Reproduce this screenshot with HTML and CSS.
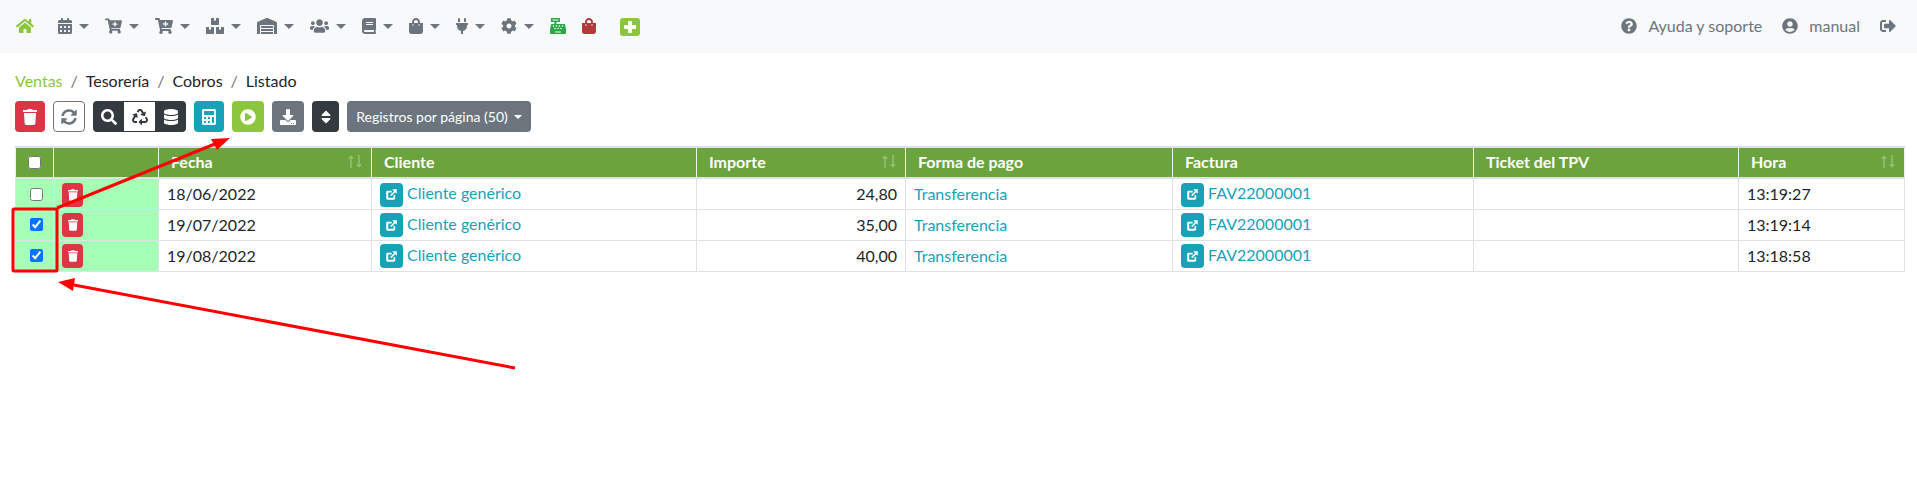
FILE: index.html
```html
<!DOCTYPE html>
<html lang="es">
<head>
<meta charset="utf-8">
<title>Cobros</title>
<link rel="stylesheet" href="styles.css">
</head>
<body>
<svg class="defs" aria-hidden="true">
<symbol id="i-home" viewBox="0 0 576 512"><path d="M280.37 148.26L96 300.11V464a16 16 0 0 0 16 16l112.06-.29a16 16 0 0 0 15.92-16V368a16 16 0 0 1 16-16h64a16 16 0 0 1 16 16v95.64a16 16 0 0 0 16 16.05L464 480a16 16 0 0 0 16-16V300L295.67 148.26a12.19 12.19 0 0 0-15.3 0zM571.6 251.47L488 182.56V44.05a12 12 0 0 0-12-12h-56a12 12 0 0 0-12 12v72.61L318.47 43a48 48 0 0 0-61 0L4.34 251.47a12 12 0 0 0-1.6 16.9l25.5 31A12 12 0 0 0 45.15 301l235.22-193.74a12.19 12.19 0 0 1 15.3 0L530.9 301a12 12 0 0 0 16.9-1.6l25.5-31a12 12 0 0 0-1.7-16.93z"/></symbol>
<symbol id="i-cal" viewBox="0 0 448 512"><path d="M0 464c0 26.5 21.5 48 48 48h352c26.5 0 48-21.5 48-48V192H0v272zm320-196c0-6.6 5.4-12 12-12h40c6.6 0 12 5.4 12 12v40c0 6.6-5.4 12-12 12h-40c-6.6 0-12-5.4-12-12v-40zm0 128c0-6.6 5.4-12 12-12h40c6.6 0 12 5.4 12 12v40c0 6.6-5.4 12-12 12h-40c-6.6 0-12-5.4-12-12v-40zM192 268c0-6.6 5.4-12 12-12h40c6.6 0 12 5.4 12 12v40c0 6.6-5.4 12-12 12h-40c-6.6 0-12-5.4-12-12v-40zm0 128c0-6.6 5.4-12 12-12h40c6.6 0 12 5.4 12 12v40c0 6.6-5.4 12-12 12h-40c-6.6 0-12-5.4-12-12v-40zM64 268c0-6.6 5.4-12 12-12h40c6.6 0 12 5.4 12 12v40c0 6.6-5.4 12-12 12H76c-6.6 0-12-5.4-12-12v-40zm0 128c0-6.6 5.4-12 12-12h40c6.6 0 12 5.4 12 12v40c0 6.6-5.4 12-12 12H76c-6.6 0-12-5.4-12-12v-40zM400 64h-48V16c0-8.8-7.2-16-16-16h-32c-8.8 0-16 7.2-16 16v48H160V16c0-8.8-7.2-16-16-16h-32c-8.8 0-16 7.2-16 16v48H48C21.5 64 0 85.5 0 112v48h448v-48c0-26.5-21.5-48-48-48z"/></symbol>
<symbol id="i-cart" viewBox="0 0 576 512"><path d="M504.717 320H211.572l6.545 32h268.418c15.401 0 26.816 14.301 23.403 29.319l-5.517 24.276C523.112 414.668 536 433.828 536 456c0 31.202-25.519 56.444-56.824 55.994-29.823-.429-54.35-24.631-55.155-54.447-.44-16.287 6.085-31.049 16.803-41.548H231.176C241.553 426.165 248 440.326 248 456c0 31.813-26.528 57.431-58.67 55.938-28.54-1.325-51.751-24.385-53.251-52.917-1.158-22.034 10.436-41.455 28.051-51.586L93.883 64H24C10.745 64 0 53.255 0 40V24C0 10.745 10.745 0 24 0h102.529c11.401 0 21.228 8.021 23.513 19.19L159.208 64H551.99c15.401 0 26.816 14.301 23.403 29.319l-47.273 208C525.637 312.246 515.923 320 504.717 320zM408 168h-48v-40c0-8.837-7.163-16-16-16h-16c-8.837 0-16 7.163-16 16v40h-48c-8.837 0-16 7.163-16 16v16c0 8.837 7.163 16 16 16h48v40c0 8.837 7.163 16 16 16h16c8.837 0 16-7.163 16-16v-40h48c8.837 0 16-7.163 16-16v-16c0-8.837-7.163-16-16-16z"/></symbol>
<symbol id="i-boxes" viewBox="0 0 576 512"><path d="M560 288h-80v96l-32-21.3-32 21.3v-96h-80c-8.8 0-16 7.2-16 16v192c0 8.8 7.2 16 16 16h224c8.8 0 16-7.2 16-16V304c0-8.8-7.2-16-16-16zm-384-64h224c8.8 0 16-7.2 16-16V16c0-8.8-7.2-16-16-16h-80v96l-32-21.3L256 96V0h-80c-8.8 0-16 7.2-16 16v192c0 8.8 7.2 16 16 16zm64 64h-80v96l-32-21.3L96 384v-96H16c-8.8 0-16 7.2-16 16v192c0 8.8 7.2 16 16 16h224c8.8 0 16-7.2 16-16V304c0-8.8-7.2-16-16-16z"/></symbol>
<symbol id="i-ware" viewBox="0 0 640 512"><path d="M504 352H136.4c-4.4 0-8 3.6-8 8l-.1 48c0 4.4 3.6 8 8 8H504c4.4 0 8-3.6 8-8v-48c0-4.4-3.6-8-8-8zm0 96H136.1c-4.4 0-8 3.6-8 8l-.1 48c0 4.4 3.6 8 8 8h368c4.4 0 8-3.6 8-8v-48c0-4.4-3.6-8-8-8zm0-192H136.6c-4.4 0-8 3.6-8 8l-.1 48c0 4.4 3.6 8 8 8H504c4.4 0 8-3.6 8-8v-48c0-4.4-3.6-8-8-8zm106.5-139L338.4 3.7a48.15 48.15 0 0 0-36.9 0L29.5 117C11.7 124.5 0 141.9 0 161.3V504c0 4.4 3.6 8 8 8h80c4.4 0 8-3.6 8-8V256c0-17.6 14.6-32 32.6-32h382.8c18 0 32.6 14.4 32.6 32v248c0 4.4 3.6 8 8 8h80c4.4 0 8-3.6 8-8V161.3c0-19.4-11.7-36.8-29.5-44.3z"/></symbol>
<symbol id="i-users" viewBox="0 0 640 512"><path d="M96 224c35.3 0 64-28.7 64-64s-28.7-64-64-64-64 28.7-64 64 28.7 64 64 64zm448 0c35.3 0 64-28.7 64-64s-28.7-64-64-64-64 28.7-64 64 28.7 64 64 64zm32 32h-64c-17.6 0-33.5 7.1-45.1 18.6 40.3 22.1 68.9 62 75.1 109.4h66c17.7 0 32-14.3 32-32v-32c0-35.3-28.7-64-64-64zm-256 0c61.9 0 112-50.1 112-112S381.9 32 320 32 208 82.1 208 144s50.1 112 112 112zm76.8 32h-8.3c-20.8 10-43.9 16-68.5 16s-47.6-6-68.5-16h-8.3C179.6 288 128 339.6 128 403.2V432c0 26.5 21.5 48 48 48h288c26.5 0 48-21.5 48-48v-28.8c0-63.6-51.6-115.2-115.2-115.2zm-223.7-13.4C161.5 263.1 145.6 256 128 256H64c-35.3 0-64 28.7-64 64v32c0 17.7 14.3 32 32 32h65.9c6.3-47.4 34.9-87.3 75.2-109.4z"/></symbol>
<symbol id="i-book" viewBox="0 0 448 512"><path d="M448 360V24c0-13.3-10.7-24-24-24H96C43 0 0 43 0 96v320c0 53 43 96 96 96h328c13.3 0 24-10.7 24-24v-16c0-7.5-3.5-14.3-8.9-18.7-4.2-15.4-4.2-59.3 0-74.7 5.4-4.3 8.9-11.1 8.9-18.6zM128 134c0-3.3 2.7-6 6-6h212c3.3 0 6 2.7 6 6v20c0 3.3-2.7 6-6 6H134c-3.3 0-6-2.7-6-6v-20zm0 64c0-3.3 2.7-6 6-6h212c3.3 0 6 2.7 6 6v20c0 3.3-2.7 6-6 6H134c-3.3 0-6-2.7-6-6v-20zm253.4 250H96c-17.7 0-32-14.3-32-32 0-17.6 14.4-32 32-32h285.4c-1.9 17.1-1.9 46.9 0 64z"/></symbol>
<symbol id="i-bag" viewBox="0 0 448 512"><path d="M352 160v-32C352 57.42 294.579 0 224 0 153.42 0 96 57.42 96 128v32H0v272c0 44.183 35.817 80 80 80h288c44.183 0 80-35.817 80-80V160h-96zm-192-32c0-35.29 28.71-64 64-64s64 28.71 64 64v32H160v-32zm160 120c-13.255 0-24-10.745-24-24s10.745-24 24-24 24 10.745 24 24-10.745 24-24 24zm-192 0c-13.255 0-24-10.745-24-24s10.745-24 24-24 24 10.745 24 24-10.745 24-24 24z"/></symbol>
<symbol id="i-plug" viewBox="0 0 384 512"><path d="M320,32a32,32,0,0,0-64,0v96h64Zm48,128H16A16,16,0,0,0,0,176v32a16,16,0,0,0,16,16H32v32A160.07,160.07,0,0,0,160,412.8V512h64V412.8A160.07,160.07,0,0,0,352,256V224h16a16,16,0,0,0,16-16V176A16,16,0,0,0,368,160ZM128,32a32,32,0,0,0-64,0v96h64Z"/></symbol>
<symbol id="i-cog" viewBox="0 0 512 512"><path d="M487.4 315.7l-42.6-24.6c4.3-23.2 4.3-47 0-70.2l42.6-24.6c4.9-2.8 7.1-8.6 5.5-14-11.1-35.6-30-67.8-54.7-94.6-3.8-4.1-10-5.1-14.8-2.3L380.8 110c-17.9-15.4-38.5-27.3-60.8-35.1V25.8c0-5.6-3.9-10.5-9.4-11.7-36.7-8.2-74.3-7.8-109.2 0-5.5 1.2-9.4 6.1-9.4 11.7V75c-22.2 7.9-42.8 19.8-60.8 35.1L88.7 85.5c-4.9-2.8-11-1.9-14.8 2.3-24.7 26.7-43.6 58.9-54.7 94.6-1.7 5.4.6 11.2 5.5 14L67.3 221c-4.3 23.2-4.3 47 0 70.2l-42.6 24.6c-4.9 2.8-7.1 8.6-5.5 14 11.1 35.6 30 67.8 54.7 94.6 3.8 4.1 10 5.1 14.8 2.3l42.6-24.6c17.9 15.4 38.5 27.3 60.8 35.1v49.2c0 5.6 3.9 10.5 9.4 11.7 36.7 8.2 74.3 7.8 109.2 0 5.5-1.2 9.4-6.1 9.4-11.7v-49.2c22.2-7.9 42.8-19.8 60.8-35.1l42.6 24.6c4.9 2.8 11 1.9 14.8-2.3 24.7-26.7 43.6-58.9 54.7-94.6 1.5-5.5-.7-11.3-5.6-14.1zM256 336c-44.1 0-80-35.9-80-80s35.9-80 80-80 80 35.9 80 80-35.9 80-80 80z"/></symbol>
<symbol id="i-cash" viewBox="0 0 512 512"><path d="M511.1 378.8l-26.7-160c-2.6-15.4-15.9-26.7-31.6-26.7H208v-64h96c8.8 0 16-7.2 16-16V16c0-8.8-7.2-16-16-16H48c-8.8 0-16 7.2-16 16v96c0 8.8 7.2 16 16 16h96v64H59.1c-15.6 0-29 11.3-31.6 26.7L.8 378.7c-.6 3.5-.9 7-.9 10.5V480c0 17.7 14.3 32 32 32h448c17.7 0 32-14.3 32-32v-90.7c.1-3.5-.2-7-.8-10.5zM280 248c0-8.8 7.2-16 16-16h16c8.8 0 16 7.2 16 16v16c0 8.8-7.2 16-16 16h-16c-8.8 0-16-7.2-16-16v-16zm-32 64h16c8.8 0 16 7.2 16 16v16c0 8.8-7.2 16-16 16h-16c-8.8 0-16-7.2-16-16v-16c0-8.8 7.2-16 16-16zm-32-80c8.8 0 16 7.2 16 16v16c0 8.8-7.2 16-16 16h-16c-8.8 0-16-7.2-16-16v-16c0-8.8 7.2-16 16-16h16zM80 80V48h192v32H80zm40 200h-16c-8.8 0-16-7.2-16-16v-16c0-8.8 7.2-16 16-16h16c8.8 0 16 7.2 16 16v16c0 8.8-7.2 16-16 16zm16 64v-16c0-8.8 7.2-16 16-16h16c8.8 0 16 7.2 16 16v16c0 8.8-7.2 16-16 16h-16c-8.8 0-16-7.2-16-16zm216 112c0 4.4-3.6 8-8 8H168c-4.4 0-8-3.6-8-8v-16c0-4.4 3.6-8 8-8h176c4.4 0 8 3.6 8 8v16zm24-112c0 8.8-7.2 16-16 16h-16c-8.8 0-16-7.2-16-16v-16c0-8.8 7.2-16 16-16h16c8.8 0 16 7.2 16 16v16zm48-80c0 8.8-7.2 16-16 16h-16c-8.8 0-16-7.2-16-16v-16c0-8.8 7.2-16 16-16h16c8.8 0 16 7.2 16 16v16z"/></symbol>
<symbol id="i-help" viewBox="0 0 512 512"><path d="M504 256c0 136.997-111.043 248-248 248S8 392.997 8 256C8 119.083 119.043 8 256 8s248 111.083 248 248zM262.655 90c-54.497 0-89.255 22.957-116.549 63.758-3.536 5.286-2.353 12.415 2.715 16.258l34.699 26.31c5.205 3.947 12.621 3.008 16.665-2.122 17.864-22.658 30.113-35.797 57.303-35.797 20.429 0 45.698 13.148 45.698 32.958 0 14.976-12.363 22.667-32.534 33.976C247.128 238.528 216 254.941 216 296v4c0 6.627 5.373 12 12 12h56c6.627 0 12-5.373 12-12v-1.333c0-28.462 83.186-29.647 83.186-106.667 0-58.002-60.165-102-116.531-102zM256 338c-25.365 0-46 20.635-46 46 0 25.364 20.635 46 46 46s46-20.636 46-46c0-25.365-20.635-46-46-46z"/></symbol>
<symbol id="i-user" viewBox="0 0 496 512"><path d="M248 8C111 8 0 119 0 256s111 248 248 248 248-111 248-248S385 8 248 8zm0 96c48.6 0 88 39.4 88 88s-39.4 88-88 88-88-39.4-88-88 39.4-88 88-88zm0 344c-58.7 0-111.3-26.6-146.5-68.2 18.8-35.4 55.6-59.8 98.5-59.8 2.4 0 4.8.4 7.1 1.1 13 4.2 26.6 6.9 40.9 6.9 14.3 0 28-2.7 40.9-6.9 2.3-.7 4.7-1.1 7.1-1.1 42.9 0 79.7 24.4 98.5 59.8C359.3 421.4 306.7 448 248 448z"/></symbol>
<symbol id="i-out" viewBox="0 0 512 512"><path d="M497 273L329 441c-15 15-41 4.5-41-17v-96H152c-13.3 0-24-10.7-24-24v-96c0-13.3 10.7-24 24-24h136V88c0-21.4 25.9-32 41-17l168 168c9.3 9.4 9.3 24.6 0 34zM192 436v-40c0-6.6-5.4-12-12-12H96c-17.7 0-32-14.3-32-32V160c0-17.7 14.3-32 32-32h84c6.6 0 12-5.4 12-12V76c0-6.6-5.4-12-12-12H96c-53 0-96 43-96 96v192c0 53 43 96 96 96h84c6.6 0 12-5.4 12-12z"/></symbol>
<symbol id="i-trash" viewBox="0 0 448 512"><path d="M432 32H312l-9.4-18.7A24 24 0 0 0 281.1 0H166.8a23.72 23.72 0 0 0-21.4 13.3L136 32H16A16 16 0 0 0 0 48v32a16 16 0 0 0 16 16h416a16 16 0 0 0 16-16V48a16 16 0 0 0-16-16zM53.2 467a48 48 0 0 0 47.9 45h245.8a48 48 0 0 0 47.9-45L416 128H32z"/></symbol>
<symbol id="i-sync" viewBox="0 0 512 512"><path d="M370.72 133.28C339.458 104.008 298.888 87.962 255.848 88c-77.458.068-144.328 53.178-162.791 126.85-1.344 5.363-6.122 9.15-11.651 9.15H24.103c-7.498 0-13.194-6.807-11.807-14.176C33.933 94.924 134.813 8 256 8c66.448 0 126.791 26.136 171.315 68.685L463.03 40.97C478.149 25.851 504 36.559 504 57.941V192c0 13.255-10.745 24-24 24H345.941c-21.382 0-32.09-25.851-16.971-40.971l41.75-41.749zM32 296h134.059c21.382 0 32.09 25.851 16.971 40.971l-41.75 41.75c31.262 29.273 71.835 45.319 114.876 45.28 77.418-.07 144.315-53.144 162.787-126.849 1.344-5.363 6.122-9.15 11.651-9.15h57.304c7.498 0 13.194 6.807 11.807 14.176C478.067 417.076 377.187 504 256 504c-66.448 0-126.791-26.136-171.315-68.685L48.97 471.03C33.851 486.149 8 475.441 8 454.059V320c0-13.255 10.745-24 24-24z"/></symbol>
<symbol id="i-search" viewBox="0 0 512 512"><path d="M505 442.7L405.3 343c-4.5-4.5-10.6-7-17-7H372c27.6-35.3 44-79.7 44-128C416 93.1 322.9 0 208 0S0 93.1 0 208s93.1 208 208 208c48.3 0 92.7-16.4 128-44v16.3c0 6.4 2.5 12.5 7 17l99.7 99.7c9.4 9.4 24.6 9.4 33.9 0l28.3-28.3c9.4-9.4 9.4-24.6.1-34zM208 336c-70.7 0-128-57.2-128-128 0-70.7 57.2-128 128-128 70.7 0 128 57.2 128 128 0 70.7-57.2 128-128 128z"/></symbol>
<symbol id="i-recycle" viewBox="0 0 512 512"><path d="M184.561 261.903c3.232 13.997-12.123 24.635-24.068 17.168l-40.736-25.455-50.867 81.402C55.606 356.273 70.96 384 96.012 384H148c6.627 0 12 5.373 12 12v40c0 6.627-5.373 12-12 12H96.115c-75.334 0-121.302-83.048-81.408-146.88l50.822-81.388-40.725-25.448c-12.081-7.547-8.966-25.961 4.879-29.158l110.237-25.45c8.611-1.988 17.201 3.381 19.189 11.99l25.452 110.237zm98.561-182.915l41.289 66.076-40.74 25.457c-12.051 7.528-9 25.953 4.879 29.158l110.237 25.45c8.672 1.999 17.215-3.438 19.189-11.99l25.45-110.237c3.197-13.844-11.99-24.719-24.068-17.168l-40.687 25.424-41.263-66.082c-37.521-60.033-125.209-60.171-162.816 0l-17.963 28.766c-3.51 5.62-1.8 13.021 3.82 16.533l33.919 21.195c5.62 3.512 13.024 1.803 16.536-3.817l17.961-28.743c12.712-20.341 41.973-19.676 54.257-.022zM497.288 301.12l-27.515-44.065c-3.511-5.623-10.916-7.334-16.538-3.821l-33.861 21.159c-5.62 3.512-7.33 10.915-3.818 16.536l27.564 44.112c13.257 21.211-2.057 48.96-27.136 48.96H320V336.02c0-14.213-17.242-21.383-27.313-11.313l-80 79.981c-6.249 6.248-6.249 16.379 0 22.627l80 79.989C302.689 517.308 320 510.3 320 495.989V448h95.88c75.274 0 121.335-82.997 81.408-146.88z"/></symbol>
<symbol id="i-db" viewBox="0 0 448 512"><path d="M448 73.143v45.714C448 159.143 347.667 192 224 192S0 159.143 0 118.857V73.143C0 32.857 100.333 0 224 0s224 32.857 224 73.143zM448 176v102.857C448 319.143 347.667 352 224 352S0 319.143 0 278.857V176c48.125 33.143 136.208 48.572 224 48.572S399.874 209.143 448 176zm0 160v102.857C448 479.143 347.667 512 224 512S0 479.143 0 438.857V336c48.125 33.143 136.208 48.572 224 48.572S399.874 369.143 448 336z"/></symbol>
<symbol id="i-calc" viewBox="0 0 448 512"><path d="M400 0H48C22.4 0 0 22.4 0 48v416c0 25.6 22.4 48 48 48h352c25.6 0 48-22.4 48-48V48c0-25.6-22.4-48-48-48zM128 435.2c0 6.4-6.4 12.8-12.8 12.8H76.8c-6.4 0-12.8-6.4-12.8-12.8v-38.4c0-6.4 6.4-12.8 12.8-12.8h38.4c6.4 0 12.8 6.4 12.8 12.8v38.4zm0-128c0 6.4-6.4 12.8-12.8 12.8H76.8c-6.4 0-12.8-6.4-12.8-12.8v-38.4c0-6.4 6.4-12.8 12.8-12.8h38.4c6.4 0 12.8 6.4 12.8 12.8v38.4zm128 128c0 6.4-6.4 12.8-12.8 12.8h-38.4c-6.4 0-12.8-6.4-12.8-12.8v-38.4c0-6.4 6.4-12.8 12.8-12.8h38.4c6.4 0 12.8 6.4 12.8 12.8v38.4zm0-128c0 6.4-6.4 12.8-12.8 12.8h-38.4c-6.4 0-12.8-6.4-12.8-12.8v-38.4c0-6.4 6.4-12.8 12.8-12.8h38.4c6.4 0 12.8 6.4 12.8 12.8v38.4zm128 128c0 6.4-6.4 12.8-12.8 12.8h-38.4c-6.4 0-12.8-6.4-12.8-12.8V268.8c0-6.4 6.4-12.8 12.8-12.8h38.4c6.4 0 12.8 6.4 12.8 12.8v166.4zm0-256c0 6.4-6.4 12.8-12.8 12.8H76.8c-6.4 0-12.8-6.4-12.8-12.8V76.8C64 70.4 70.4 64 76.8 64h294.4c6.4 0 12.8 6.4 12.8 12.8v102.4z"/></symbol>
<symbol id="i-play" viewBox="0 0 512 512"><path d="M256 8C119 8 8 119 8 256s111 248 248 248 248-111 248-248S393 8 256 8zm115.7 272l-176 101c-15.8 8.8-35.7-2.5-35.7-21V152c0-18.4 19.8-29.8 35.7-21l176 107c16.4 9.2 16.4 32.9 0 42z"/></symbol>
<symbol id="i-down" viewBox="0 0 512 512"><path d="M216 0h80c13.3 0 24 10.7 24 24v168h87.7c17.8 0 26.7 21.5 14.1 34.1L269.7 378.3c-7.5 7.5-19.8 7.5-27.3 0L90.1 226.1c-12.6-12.6-3.7-34.1 14.1-34.1H192V24c0-13.3 10.7-24 24-24zm296 376v112c0 13.3-10.7 24-24 24H24c-13.3 0-24-10.7-24-24V376c0-13.3 10.7-24 24-24h146.7l49 49c20.1 20.1 52.5 20.1 72.6 0l49-49H488c13.3 0 24 10.7 24 24zm-124 88c0-11-9-20-20-20s-20 9-20 20 9 20 20 20 20-9 20-20zm64 0c0-11-9-20-20-20s-20 9-20 20 9 20 20 20 20-9 20-20z"/></symbol>
<symbol id="i-sort" viewBox="0 0 320 512"><path d="M41 288h238c21.4 0 32.1 25.9 17 41L177 448c-9.4 9.4-24.6 9.4-33.9 0L24 329c-15.1-15.1-4.4-41 17-41zm255-105L177 64c-9.4-9.4-24.6-9.4-33.9 0L24 183c-15.1 15.1-4.4 41 17 41h238c21.4 0 32.1-25.9 17-41z"/></symbol>
<symbol id="i-ext" viewBox="0 0 512 512"><path d="M96 112h168v64H128v208h208V272h64v144c0 26-22 48-48 48H96c-26 0-48-22-48-48V160c0-26 22-48 48-48zM304 48h150c6 0 10 4 10 10v150c0 9-11 13-17 7l-48-48-144 144c-4 4-10 4-14 0l-29-29c-4-4-4-10 0-14l144-144-59-59c-6-6-2-17 7-17z"/></symbol>
<symbol id="i-arrows" viewBox="0 0 14 13"><path d="M3 13V1.5M.8 3.8 3 1.3l2.2 2.5M11 0v11.5M8.800 9.200 11 11.700l2.200-2.500"/></symbol>
</svg>

<nav class="topbar">
  <div class="menu">
    <a class="item home"><svg class="ic w18 green"><use href="#i-home"/></svg></a>
    <a class="item"><svg class="ic w14"><use href="#i-cal"/></svg><i class="caret"></i></a>
    <a class="item"><svg class="ic w17"><use href="#i-cart"/></svg><i class="caret"></i></a>
    <a class="item"><svg class="ic w18"><use href="#i-cart"/></svg><i class="caret"></i></a>
    <a class="item"><svg class="ic w18"><use href="#i-boxes"/></svg><i class="caret"></i></a>
    <a class="item"><svg class="ic w20"><use href="#i-ware"/></svg><i class="caret"></i></a>
    <a class="item"><svg class="ic w19"><use href="#i-users"/></svg><i class="caret"></i></a>
    <a class="item"><svg class="ic w14"><use href="#i-book"/></svg><i class="caret"></i></a>
    <a class="item"><svg class="ic w14"><use href="#i-bag"/></svg><i class="caret"></i></a>
    <a class="item"><svg class="ic w12"><use href="#i-plug"/></svg><i class="caret"></i></a>
    <a class="item"><svg class="ic w16"><use href="#i-cog"/></svg><i class="caret"></i></a>
    <a class="item"><svg class="ic w16 c-cash"><use href="#i-cash"/></svg></a>
    <a class="item"><svg class="ic w14 c-bag"><use href="#i-bag"/></svg></a>
    <a class="item plus-item"><span class="plus"></span></a>
  </div>
  <div class="user">
    <a class="uitem"><svg class="ic w16"><use href="#i-help"/></svg><span>Ayuda y soporte</span></a>
    <a class="uitem"><svg class="ic w16"><use href="#i-user"/></svg><span>manual</span></a>
    <a class="uitem"><svg class="ic w16"><use href="#i-out"/></svg></a>
  </div>
</nav>

<main class="content">
  <ol class="crumbs">
    <li class="first">Ventas</li>
    <li>Tesorería</li>
    <li>Cobros</li>
    <li>Listado</li>
  </ol>
  <div class="toolbar">
    <button class="btn red w30"><svg class="bi b14"><use href="#i-trash"/></svg></button>
    <button class="btn outline w32"><svg class="bi b16"><use href="#i-sync"/></svg></button>
    <div class="group">
      <button class="btn dark seg"><svg class="bi b16"><use href="#i-search"/></svg></button>
      <button class="btn light seg"><svg class="bi b16"><use href="#i-recycle"/></svg></button>
      <button class="btn dark seg"><svg class="bi b14"><use href="#i-db"/></svg></button>
    </div>
    <button class="btn teal w30"><svg class="bi b14"><use href="#i-calc"/></svg></button>
    <button class="btn lime w32"><svg class="bi b16"><use href="#i-play"/></svg></button>
    <button class="btn grey w32"><svg class="bi b16"><use href="#i-down"/></svg></button>
    <button class="btn dark w27"><svg class="bi b10"><use href="#i-sort"/></svg></button>
    <button class="btn grey text">Registros por página (50)<i class="caret"></i></button>
  </div>

  <table class="grid">
    <colgroup>
      <col class="c1"><col class="c2"><col class="c3"><col class="c4"><col class="c5"><col class="c6"><col class="c7"><col class="c8"><col class="c9">
    </colgroup>
    <thead>
      <tr>
        <th class="center"><input type="checkbox" class="chk"></th>
        <th></th>
        <th><div class="th-in">Fecha<svg class="sort"><use href="#i-arrows"/></svg></div></th>
        <th>Cliente</th>
        <th><div class="th-in">Importe<svg class="sort"><use href="#i-arrows"/></svg></div></th>
        <th>Forma de pago</th>
        <th>Factura</th>
        <th>Ticket del TPV</th>
        <th><div class="th-in">Hora<svg class="sort"><use href="#i-arrows"/></svg></div></th>
      </tr>
    </thead>
    <tbody>
      <tr>
        <td class="mark center body-chk"><input type="checkbox" class="chk"></td>
        <td class="mark act"><a class="mini red"><svg class="bi b11"><use href="#i-trash"/></svg></a></td>
        <td>18/06/2022</td>
        <td class="lnk"><a class="mini teal"><svg class="bi b13"><use href="#i-ext"/></svg></a> <a>Cliente genérico</a></td>
        <td class="num">24,80</td>
        <td class="lnk"><a>Transferencia</a></td>
        <td class="lnk"><a class="mini teal"><svg class="bi b13"><use href="#i-ext"/></svg></a> <a>FAV22000001</a></td>
        <td></td>
        <td>13:19:27</td>
      </tr>
      <tr>
        <td class="mark center body-chk"><input type="checkbox" class="chk" checked></td>
        <td class="mark act"><a class="mini red"><svg class="bi b11"><use href="#i-trash"/></svg></a></td>
        <td>19/07/2022</td>
        <td class="lnk"><a class="mini teal"><svg class="bi b13"><use href="#i-ext"/></svg></a> <a>Cliente genérico</a></td>
        <td class="num">35,00</td>
        <td class="lnk"><a>Transferencia</a></td>
        <td class="lnk"><a class="mini teal"><svg class="bi b13"><use href="#i-ext"/></svg></a> <a>FAV22000001</a></td>
        <td></td>
        <td>13:19:14</td>
      </tr>
      <tr>
        <td class="mark center body-chk"><input type="checkbox" class="chk" checked></td>
        <td class="mark act"><a class="mini red"><svg class="bi b11"><use href="#i-trash"/></svg></a></td>
        <td>19/08/2022</td>
        <td class="lnk"><a class="mini teal"><svg class="bi b13"><use href="#i-ext"/></svg></a> <a>Cliente genérico</a></td>
        <td class="num">40,00</td>
        <td class="lnk"><a>Transferencia</a></td>
        <td class="lnk"><a class="mini teal"><svg class="bi b13"><use href="#i-ext"/></svg></a> <a>FAV22000001</a></td>
        <td></td>
        <td>13:18:58</td>
      </tr>
    </tbody>
  </table>
</main>

<svg class="notes" viewBox="0 0 1917 481" aria-hidden="true">
  <rect x="13" y="209" width="44" height="62" rx="1" class="note-box"/>
  <line x1="57" y1="208" x2="216" y2="143.5" class="note-line"/>
  <polygon points="230,138 211,139 217,150" class="note-head"/>
  <line x1="515" y1="368" x2="74" y2="285" class="note-line"/>
  <polygon points="58,282 75,278 73,291" class="note-head"/>
</svg>
</body>
</html>
```
FILE: styles.css
```css
* { box-sizing: border-box; }
html, body { margin: 0; padding: 0; }
body {
  position: relative;
  height: 481px;
  overflow: hidden;
  background: #fff;
  color: #212529;
  font-family: Lato, "Liberation Sans", sans-serif;
  font-size: 16px;
  line-height: 24px;
}
.defs { position: absolute; width: 0; height: 0; }

.ic { display: block; height: 16px; fill: #6c757d; flex: none; }
.w12 { width: 12px; }
.w14 { width: 14px; }
.w16 { width: 16px; }
.w17 { width: 17px; }
.w18 { width: 18px; }
.w19 { width: 19px; }
.w20 { width: 20px; }
.green { fill: #8cc63f; }
.c-cash { fill: #28a745; }
.c-bag { fill: #b33a3a; }

.topbar {
  height: 53px;
  background: #f8f9fa;
  display: flex;
  align-items: center;
  justify-content: space-between;
  padding: 0 21px 1px 8px;
}
.menu { display: flex; align-items: center; }
.item { display: flex; align-items: center; padding: 0 8px; }
.home { margin-right: 8px; }
.plus-item { margin-left: 8px; }
.caret {
  display: inline-block;
  margin-left: 7px;
  border-top: 5px solid #6c757d;
  border-left: 5px solid transparent;
  border-right: 5px solid transparent;
}
.plus {
  display: block;
  position: relative;
  width: 20px;
  height: 18px;
  margin-top: 2px;
  border-radius: 3px;
  background: #8cc63f;
}
.plus::before, .plus::after {
  content: "";
  position: absolute;
  background: #fff;
  border-radius: 1px;
}
.plus::before { left: 8px; top: 3px; width: 4px; height: 12px; }
.plus::after { left: 4px; top: 7px; width: 12px; height: 4px; }

.user { display: flex; align-items: center; gap: 20px; }
.uitem { display: flex; align-items: center; gap: 11px; color: #6c757d; }

.content { padding: 0 13px 0 15px; }
.crumbs {
  list-style: none;
  display: flex;
  margin: 16px 0 8px;
  padding: 0;
}
.crumbs li + li::before { content: "/"; padding: 0 8px; color: #6c757d; }
.crumbs .first { color: #8cc63f; }

.toolbar { display: flex; gap: 8px; margin-bottom: 14px; }
.btn {
  display: flex;
  align-items: center;
  justify-content: center;
  height: 31px;
  padding: 0;
  border: 0;
  border-radius: 4px;
  color: #fff;
  font-family: inherit;
  font-size: 14px;
}
.bi { display: block; fill: currentColor; flex: none; }
.b10 { width: 10px; height: 16px; }
.b11 { width: 10px; height: 12px; }
.b13 { width: 13px; height: 13px; }
.b14 { width: 14px; height: 16px; }
.b16 { width: 16px; height: 16px; }
.w27 { width: 27px; }
.w30 { width: 30px; }
.w32 { width: 32px; }
.red { background: #dc3545; color: #fff; }
.teal { background: #17a2b8; color: #fff; }
.lime { background: #8cc63f; }
.grey { background: #6c757d; }
.dark { background: #343a40; }
.light { background: #fff; color: #343a40; border-top: 1px solid #343a40; border-bottom: 1px solid #343a40; }
.outline { background: #fff; color: #6c757d; border: 1px solid #6c757d; }
.group { display: flex; border-radius: 4px; overflow: hidden; }
.seg { width: 31px; border-radius: 0; }
.text { width: 184px; }
.text .caret { border-top-color: #fff; border-top-width: 4px; border-left-width: 4px; border-right-width: 4px; margin-left: 6px; }

.grid {
  width: 1889px;
  table-layout: fixed;
  border-collapse: collapse;
  border: 1px solid #dee2e6;
}
.c1 { width: 38px; }
.c2 { width: 105px; }
.c3 { width: 213px; }
.c4 { width: 325px; }
.c5 { width: 209px; }
.c6 { width: 267px; }
.c7 { width: 301px; }
.c8 { width: 265px; }
.c9 { width: 166px; }

.grid th {
  height: 31px;
  padding: 0 12px 2px;
  background: #6ba33d;
  border-top: 2px solid #dee2e6;
  border-bottom: 2px solid #dee2e6;
  border-left: 1px solid #eef1ee;
  border-right: 1px solid #eef1ee;
  color: #fff;
  font-weight: 700;
  text-align: left;
}
.th-in { display: flex; justify-content: space-between; align-items: center; }
.sort {
  display: block;
  width: 14px;
  height: 13px;
  margin-right: -3px;
  fill: none;
  stroke: #fff;
  stroke-width: 1.5;
  opacity: .3;
}
.grid td {
  height: 31px;
  padding: 0 8px;
  border: 1px solid #dee2e6;
  white-space: nowrap;
}
.grid .center { padding: 0; text-align: center; }
.grid .body-chk { padding-left: 4px; }
.grid .num { text-align: right; }
.mark { background: #a6ffb7; }
.lnk, .lnk a { color: #17a2b8; }
.chk { display: inline-block; width: 13px; height: 13px; margin: 0 0 3px; vertical-align: middle; }
.mini {
  display: inline-flex;
  align-items: center;
  justify-content: center;
  width: 23px;
  height: 24px;
  border-radius: 4px;
  vertical-align: middle;
}
.lnk .mini { color: #fff; }
.act .mini { width: 21px; }

.notes { position: absolute; left: 0; top: 0; width: 1917px; height: 481px; pointer-events: none; }
.note-box { fill: none; stroke: #f00; stroke-width: 3; }
.note-line { stroke: #f00; stroke-width: 3; }
.note-head { fill: #f00; }
```
